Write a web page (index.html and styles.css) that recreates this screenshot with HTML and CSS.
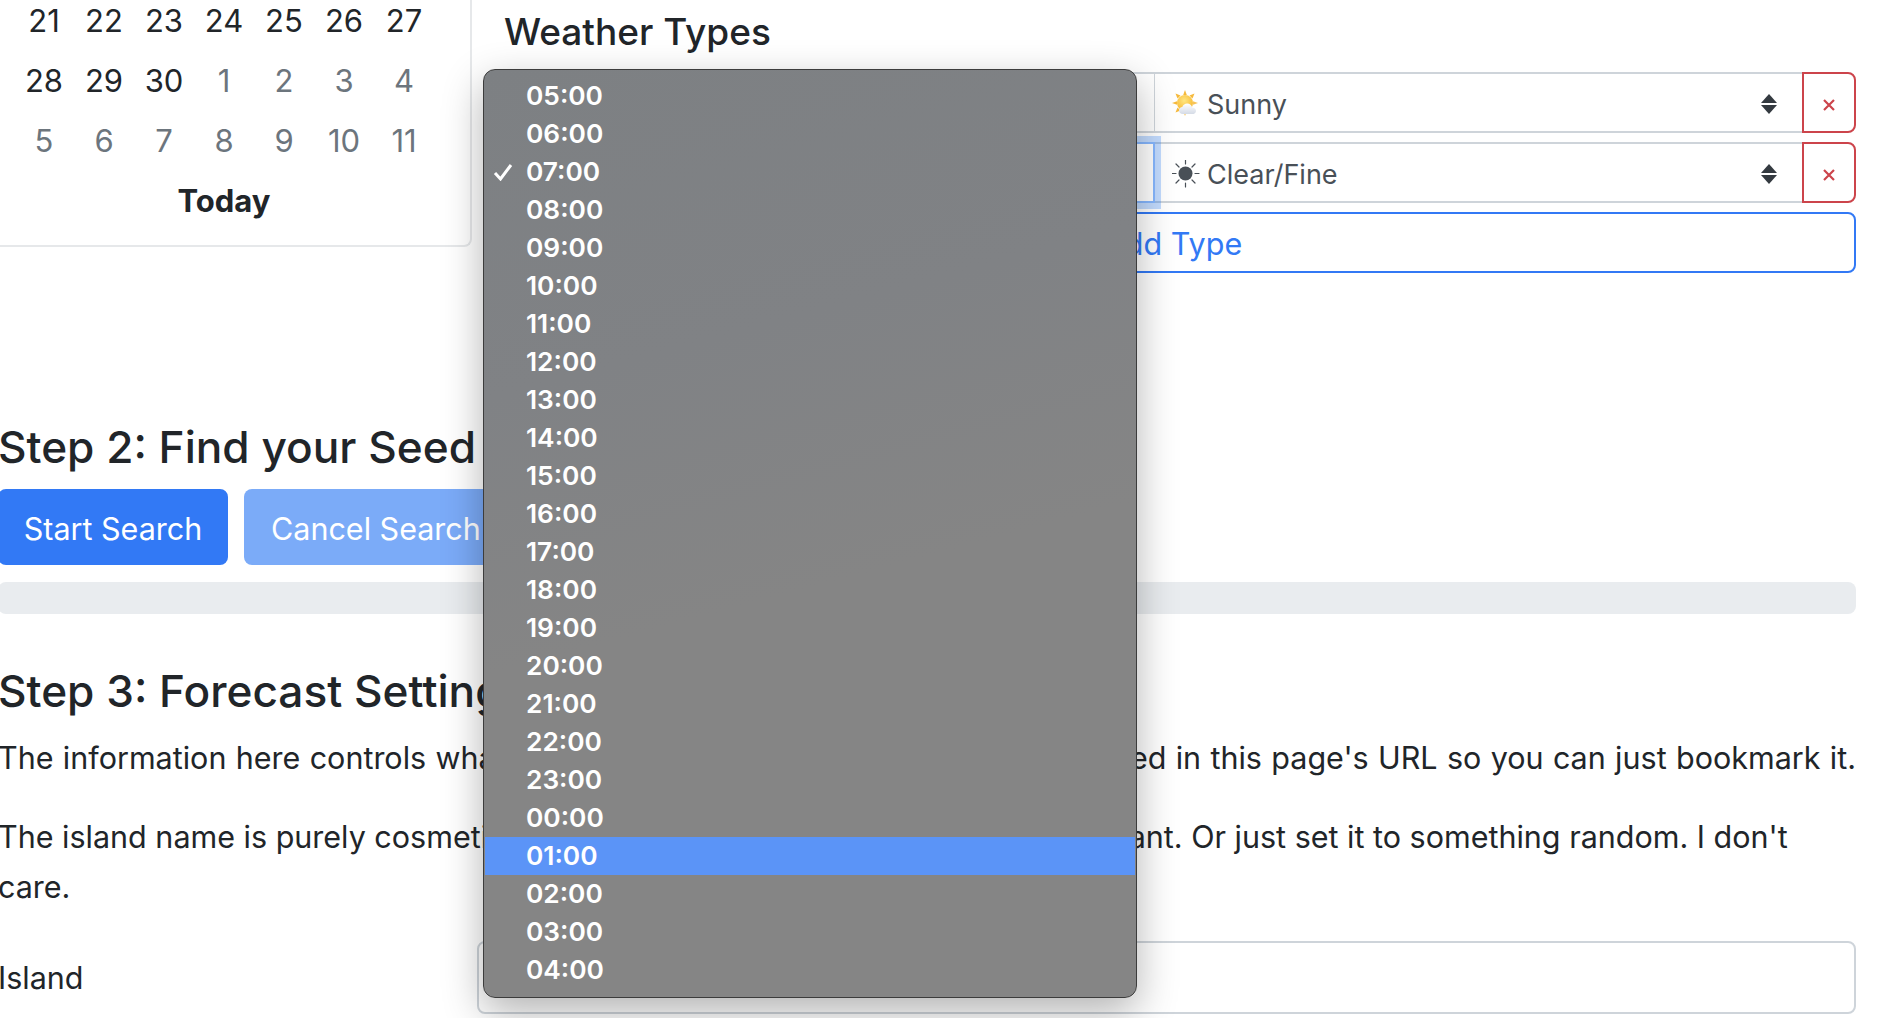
FILE: index.html
```html
<!DOCTYPE html>
<html lang="en">
<head>
<meta charset="utf-8">
<title>MeteoNook</title>
<link rel="stylesheet" href="styles.css">
</head>
<body>
<main class="page">
  <section class="top">
    <div class="calendar">
      <div class="cal-grid">
        <span>21</span><span>22</span><span>23</span><span>24</span><span>25</span><span>26</span><span>27</span>
        <span>28</span><span>29</span><span>30</span><span class="muted">1</span><span class="muted">2</span><span class="muted">3</span><span class="muted">4</span>
        <span class="muted">5</span><span class="muted">6</span><span class="muted">7</span><span class="muted">8</span><span class="muted">9</span><span class="muted">10</span><span class="muted">11</span>
      </div>
      <div class="today">Today</div>
    </div>
    <div class="weather">
      <h4 class="weather-title">Weather Types</h4>
      <div class="group">
        <div class="sel sel-time"></div>
        <div class="sel sel-type">
          <svg class="wicon" viewBox="0 0 28 28" aria-hidden="true">
            <defs>
              <radialGradient id="sun" cx="45%" cy="35%" r="70%"><stop offset="0" stop-color="#ffe680"/><stop offset="1" stop-color="#f7b52c"/></radialGradient>
              <linearGradient id="cloud" x1="0" y1="0" x2="0" y2="1"><stop offset="0" stop-color="#ffffff"/><stop offset="1" stop-color="#d5dbe6"/></linearGradient>
            </defs>
            <g fill="#f6b93b">
              <path d="M13 0l1.800 5h-3.600z"/><path d="M13 26l-1.800-5h3.600z" opacity=".85"/><path d="M0 13l5-1.800v3.600z"/><path d="M3.500 3.500l5 2-3 3z"/><path d="M3.500 22.500l2-5 3 3z"/><path d="M22.500 3.500l-2 5-3-3z"/><path d="M26 13l-5 1.800v-3.600z" opacity=".85"/>
            </g>
            <circle cx="13" cy="13" r="8" fill="url(#sun)"/>
            <path d="M11 24c-2.600 0-4-1.700-4-3.500 0-2 1.500-3.300 3.300-3.400.7-2.300 2.700-3.600 4.800-3.600 2.700 0 4.700 1.800 5.100 4.100 2 .1 3.800 1.400 3.800 3.300 0 2-1.700 3.100-3.700 3.100z" fill="url(#cloud)"/>
          </svg>
          <span class="sel-text">Sunny</span>
          <svg class="updown" viewBox="0 0 16 20" aria-hidden="true"><path d="M8 0l8 9H0z"/><path d="M8 20l-8-9h16z"/></svg>
        </div>
        <button class="del" type="button" aria-label="Remove"><svg viewBox="0 0 12 12"><path d="M1 1l10 10M11 1L1 11"/></svg></button>
      </div>
      <div class="group">
        <div class="sel sel-time sel-focus"></div>
        <div class="sel sel-type">
          <svg class="wicon" viewBox="0 0 28 28" aria-hidden="true">
            <circle cx="13.500" cy="13.500" r="7" fill="#495057"/>
            <g stroke="#495057" stroke-width="1.200" stroke-linecap="round">
              <path d="M13.500 0v4M13.500 23v4M0 13.500h4M23 13.500h4M4 4l3 3M20 20l3 3M23 4l-3 3M7 20l-3 3"/>
            </g>
          </svg>
          <span class="sel-text">Clear/Fine</span>
          <svg class="updown" viewBox="0 0 16 20" aria-hidden="true"><path d="M8 0l8 9H0z"/><path d="M8 20l-8-9h16z"/></svg>
        </div>
        <button class="del" type="button" aria-label="Remove"><svg viewBox="0 0 12 12"><path d="M1 1l10 10M11 1L1 11"/></svg></button>
      </div>
      <button class="add" type="button">Add Type</button>
    </div>
  </section>

  <h2 class="step step-two">Step 2: Find your Seed</h2>
  <div class="actions">
    <button class="btn btn-start" type="button">Start Search</button>
    <button class="btn btn-cancel" type="button">Cancel Search</button>
  </div>
  <div class="progress"></div>

  <h2 class="step step-three">Step 3: Forecast Settings</h2>
  <p class="para para-one">The information here controls what is shown in the forecast. Everything is stored in this page's URL so you can just bookmark it.</p>
  <p class="para para-two">The island name is purely cosmetic, so feel free to set it to anything that you want. Or just set it to something random. I don't care.</p>
  <div class="field">
    <label class="field-label">Island</label>
    <div class="field-input"></div>
  </div>
</main>

<div class="menu">
  <div class="item">05:00</div>
  <div class="item">06:00</div>
  <div class="item"><svg class="check" viewBox="0 0 20 18" aria-hidden="true"><path d="M2 10l5.500 6L18 2"/></svg>07:00</div>
  <div class="item">08:00</div>
  <div class="item">09:00</div>
  <div class="item">10:00</div>
  <div class="item">11:00</div>
  <div class="item">12:00</div>
  <div class="item">13:00</div>
  <div class="item">14:00</div>
  <div class="item">15:00</div>
  <div class="item">16:00</div>
  <div class="item">17:00</div>
  <div class="item">18:00</div>
  <div class="item">19:00</div>
  <div class="item">20:00</div>
  <div class="item">21:00</div>
  <div class="item">22:00</div>
  <div class="item">23:00</div>
  <div class="item">00:00</div>
  <div class="item active">01:00</div>
  <div class="item">02:00</div>
  <div class="item">03:00</div>
  <div class="item">04:00</div>
</div>
</body>
</html>
```

FILE: styles.css
```css
* { box-sizing: border-box; }
html, body { margin: 0; height: 100%; overflow: hidden; background: #fff; }
body {
  position: relative;
  font-family: Inter, "Liberation Sans", sans-serif;
  font-size: 30.500px;
  line-height: 50px;
  color: #212529;
}
.page { width: 1858px; margin: -9px 0 0 -2px; }

.top { display: flex; height: 256px; }
.calendar {
  flex: none;
  width: 495px;
  height: 256px;
  margin-left: -21px;
  padding: 0 0 0 37px;
  border-right: 2px solid #e6e8ea;
  border-bottom: 2px solid #e6e8ea;
  border-bottom-right-radius: 8px;
  font-size: 31px;
}
.cal-grid { display: grid; grid-template-columns: repeat(7, 60px); grid-auto-rows: 60px; align-items: center; justify-items: center; }
.muted { color: #6c757d; }
.today { width: 420px; height: 60px; line-height: 60px; text-align: center; font-weight: 700; }

.weather { flex: 1; margin-left: 30px; min-width: 0; }
.weather-title { margin: 17px 0 16px 2px; height: 48px; font-size: 37px; line-height: 48px; font-weight: 500; }
.group { display: flex; height: 61px; margin-bottom: 9px; }
.sel { height: 61px; border: 2px solid #ced4da; background: #fff; }
.sel-time { flex: none; width: 653px; border-radius: 8px 0 0 8px; border-right-width: 1px; }
.sel-focus { position: relative; z-index: 1; border: 2px solid #86b7fe; box-shadow: 0 0 0 6px rgba(13, 110, 253, .25); }
.sel-type { flex: 1; display: flex; align-items: center; padding: 2px 25px 0 17px; border-left: 0; border-right: 0; color: #495057; font-size: 27px; }
.wicon { flex: none; width: 28px; height: 28px; margin-right: 7px; }
.sel-text { flex: 1; padding-top: 2px; }
.updown { flex: none; width: 16px; height: 20px; fill: #343a40; }
.del {
  flex: none;
  width: 54px;
  height: 61px;
  padding: 4px 0 0;
  display: flex;
  align-items: center;
  justify-content: center;
  background: #fff;
  border: 2px solid #cc444b;
  border-radius: 0 8px 8px 0;
}
.del svg { width: 12px; height: 12px; fill: none; stroke: #cc444b; stroke-width: 2.200; }
.add {
  display: block;
  width: 100%;
  height: 61px;
  padding: 2px 12px 0 0;
  background: #fff;
  border: 2px solid #3279f5;
  border-radius: 8px;
  color: #3279f5;
  font: inherit;
}

.step { margin: 0; font-size: 44.200px; line-height: 50px; font-weight: 500; }
.step-two { margin-top: 175px; }
.actions { display: flex; gap: 16px; margin-top: 17px; }
.btn { height: 76px; padding: 3px 22px 0; border: 0; border-radius: 8px; color: #fff; font: inherit; }
.btn-start { width: 230px; background: #3279f5; }
.btn-cancel { background: #7babf8; padding: 3px 27px 0; }
.progress { height: 32px; margin-top: 17px; background: #e9ecef; border-radius: 8px; }
.step-three { margin-top: 52px; }
.para { margin: 0; }
.para-one { margin-top: 17px; text-align-last: justify; }
.para-two { margin-top: 29px; }
.field { display: flex; align-items: center; margin-top: 29px; }
.field-label { flex: none; width: 479px; }
.field-input { flex: 1; height: 73px; border: 2px solid #ced4da; border-radius: 8px; background: #fff; }

.menu {
  position: absolute;
  z-index: 10;
  left: 483px;
  top: 69px;
  width: 654px;
  height: 929px;
  padding: 7px 1px;
  border: 1px solid #3c3c3c;
  border-radius: 12px;
  background: linear-gradient(165deg, #7d8083 0%, #808285 30%, #858585 55%, #858585 100%);
  box-shadow: 0 14px 40px rgba(0, 0, 0, .3);
  color: #fff;
  font-size: 26.300px;
  font-weight: 600;
}
.item { position: relative; height: 38px; padding-left: 41px; line-height: 38px; }
.active { background: #5b94f7; }
.check { position: absolute; left: 8px; top: 10px; width: 20px; height: 18px; fill: none; stroke: #fff; stroke-width: 3; }
```
